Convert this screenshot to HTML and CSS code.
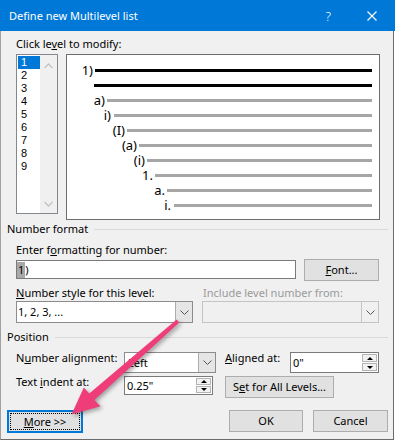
FILE: index.html
```html
<!DOCTYPE html>
<html lang="en">
<head>
  <meta charset="UTF-8" />
  <title>Define new Multilevel list</title>
  <link rel="stylesheet" href="styles.css">
</head>
<body>
  <div class="dialog">
    <div class="titlebar">
      <span class="title">Define new Multilevel list</span>
      <span class="help">?</span>
      <span class="close">
        <svg width="10" height="10" viewBox="0 0 10 10"><path d="M0.5 0.5 L9.5 9.5 M9.5 0.5 L0.5 9.5" stroke="#fff" stroke-width="1.1" fill="none"/></svg>
      </span>
    </div>

    <div class="panel">
      <div class="label">Click le<u>v</u>el to modify:</div>
      <div class="level-row">
        <div class="listbox">
          <ul class="levels">
            <li class="selected">1</li>
            <li>2</li>
            <li>3</li>
            <li>4</li>
            <li>5</li>
            <li>6</li>
            <li>7</li>
            <li>8</li>
            <li>9</li>
          </ul>
          <div class="scrollbar">
            <svg width="9" height="6" viewBox="0 0 9 6"><path d="M0.5 5 L4.5 1 L8.5 5" stroke="#c4c4c4" stroke-width="1.4" fill="none"/></svg>
            <svg width="9" height="6" viewBox="0 0 9 6"><path d="M0.5 1 L4.5 5 L8.5 1" stroke="#c4c4c4" stroke-width="1.4" fill="none"/></svg>
          </div>
        </div>

        <div class="preview">
          <div class="pv-row lvl-1"><span class="num">1)</span><span class="bar dark"></span></div>
          <div class="pv-row lvl-cont"><span class="num"></span><span class="bar dark"></span></div>
          <div class="pv-row lvl-2"><span class="num">a)</span><span class="bar"></span></div>
          <div class="pv-row lvl-3"><span class="num">i)</span><span class="bar"></span></div>
          <div class="pv-row lvl-4"><span class="num">(I)</span><span class="bar"></span></div>
          <div class="pv-row lvl-5"><span class="num">(a)</span><span class="bar"></span></div>
          <div class="pv-row lvl-6"><span class="num">(i)</span><span class="bar"></span></div>
          <div class="pv-row lvl-7"><span class="num">1.</span><span class="bar"></span></div>
          <div class="pv-row lvl-8"><span class="num">a.</span><span class="bar"></span></div>
          <div class="pv-row lvl-9"><span class="num">i.</span><span class="bar"></span></div>
        </div>
      </div>

      <div class="group"><span>Number format</span><span class="rule"></span></div>

      <div class="label gap-7">Enter f<u>o</u>rmatting for number:</div>
      <div class="fmt-row">
        <div class="textbox fmt-input"><span class="sel">1</span>)</div>
        <button class="btn font-btn"><u>F</u>ont...</button>
      </div>

      <div class="two-col labels">
        <div class="label"><u>N</u>umber style for this level:</div>
        <div class="label disabled">Include level number from:</div>
      </div>
      <div class="two-col combos">
        <div class="combo">
          <span class="combo-value">1, 2, 3, ...</span>
          <span class="combo-btn">
            <svg width="9" height="5" viewBox="0 0 9 5"><path d="M0.5 0.5 L4.5 4.5 L8.5 0.5" stroke="#555" fill="none"/></svg>
          </span>
        </div>
        <div class="combo off">
          <span class="combo-value"></span>
          <span class="combo-btn">
            <svg width="9" height="5" viewBox="0 0 9 5"><path d="M0.5 0.5 L4.5 4.5 L8.5 0.5" stroke="#555" fill="none"/></svg>
          </span>
        </div>
      </div>

      <div class="group gap-7"><span>Position</span><span class="rule"></span></div>

      <div class="pos-row first">
        <div class="label pos-label">N<u>u</u>mber alignment:</div>
        <div class="combo align-combo">
          <span class="combo-value">Left</span>
          <span class="combo-btn">
            <svg width="9" height="5" viewBox="0 0 9 5"><path d="M0.5 0.5 L4.5 4.5 L8.5 0.5" stroke="#555" fill="none"/></svg>
          </span>
        </div>
        <div class="label at-label"><u>A</u>ligned at:</div>
        <div class="spin tall">
          <span class="spin-value">0"</span>
          <span class="spin-btns"><span class="up"></span><span class="down"></span></span>
        </div>
      </div>

      <div class="pos-row second">
        <div class="label pos-label">Text <u>i</u>ndent at:</div>
        <div class="spin">
          <span class="spin-value">0.25"</span>
          <span class="spin-btns"><span class="up"></span><span class="down"></span></span>
        </div>
        <button class="btn levels-btn">S<u>e</u>t for All Levels...</button>
      </div>

      <div class="actions">
        <button class="btn more-btn"><span class="focus"><u>M</u>ore &gt;&gt;</span></button>
        <button class="btn ok-btn">OK</button>
        <button class="btn cancel-btn">Cancel</button>
      </div>
    </div>

    <!-- callout arrow drawn over the dialog -->
    <svg class="pointer" width="395" height="441" viewBox="0 0 395 441">
      <polygon points="176.7,319.5 179.3,322.5 94.4,399.9 100.4,406.3 71.5,414.5 83.8,387.5 89.3,393.6" fill="#ee3d79"/>
    </svg>
  </div>
</body>
</html>
```

FILE: styles.css
```css
* {
  box-sizing: border-box;
}

body {
  margin: 0;
  background: #fff;
  font-family: "Noto Sans", "Open Sans", sans-serif;
  font-size: 11px;
  line-height: 14px;
  color: #000;
}

u {
  text-underline-offset: 1px;
}

.dialog {
  position: relative;
  width: 395px;
  height: 441px;
}

.titlebar {
  height: 31px;
  background: #0078d7;
  color: #fff;
  display: flex;
  align-items: center;
  padding-left: 9px;
}

.title {
  flex: 1;
}

.help {
  font-size: 13px;
  margin-right: 36px;
  font-weight: 300;
}

.close {
  display: flex;
  margin-right: 18px;
}

.panel {
  width: 394px;
  height: 409px;
  background: #f0f0f0;
  border: 1px solid #6b6b6b;
  border-top: none;
  border-left-color: #a0a0a0;
  padding: 6px 0 0 15px;
}

.label {
  height: 14px;
  white-space: nowrap;
}

.label.disabled {
  color: #9a9a9a;
  padding-left: 1px;
}

.gap-7 {
  margin-top: 7px;
}

/* level picker + preview */
.level-row {
  display: flex;
  align-items: flex-start;
  margin-top: 3px;
  gap: 8px;
}

.listbox {
  width: 42px;
  height: 160px;
  border: 1px solid #828790;
  background: #fff;
  display: flex;
  padding: 1px 0 0 1px;
}

.levels {
  list-style: none;
  margin: 0;
  padding: 0;
  width: 22px;
  font-family: "Liberation Sans", Arial, sans-serif;
  font-size: 11px;
  line-height: 13px;
}

.levels li {
  padding-left: 3px;
  height: 13px;
}

.levels li.selected {
  background: #0078d7;
  color: #fff;
}

.scrollbar {
  flex: 1;
  margin-top: -1px;
  background: #f0f0f0;
  display: flex;
  flex-direction: column;
  justify-content: space-between;
  align-items: center;
  padding: 8px 0 6px;
}

.preview {
  width: 314px;
  height: 166px;
  border: 1px solid #6d6d6d;
  background: #fff;
  padding: 8px 7px 0 0;
  font-size: 13px;
}

.pv-row {
  display: flex;
  align-items: center;
  height: 15px;
  line-height: 15px;
}

.num {
  text-align: right;
  padding-right: 2px;
  flex: none;
}

.bar {
  flex: 1;
  height: 3px;
  background: #a6a6a6;
}

.bar.dark {
  background: #000;
}

.lvl-1 .num { width: 28px; }
.lvl-cont .num { width: 27px; }
.lvl-2 .num { width: 40px; }
.lvl-3 .num { width: 47px; padding-right: 3px; }
.lvl-4 .num { width: 60px; }
.lvl-5 .num { width: 72px; }
.lvl-6 .num { width: 80px; }
.lvl-7 .num { width: 88px; }
.lvl-8 .num { width: 100px; }
.lvl-9 .num { width: 107px; padding-right: 3px; }

/* group headings */
.group {
  display: flex;
  align-items: center;
  gap: 6px;
  margin-left: -9px;
  width: 381px;
  height: 14px;
  margin-top: 2px;
}

.group.gap-7 {
  margin-top: 7px;
}

.rule {
  flex: 1;
  height: 1px;
  background: #d9d9d9;
}

/* controls */
.textbox,
.combo,
.spin {
  background: #fff;
  border: 1px solid #7a7a7a;
  white-space: nowrap;
}

.fmt-row {
  display: flex;
  align-items: flex-start;
  margin-top: 2px;
  height: 22px;
}

.fmt-input {
  width: 280px;
  height: 19px;
  margin-top: 1px;
  line-height: 17px;
}

.sel {
  background: #a8a8a8;
  padding: 0 1px 1px;
}

.btn {
  font: inherit;
  color: #000;
  background: #e1e1e1;
  border: 1px solid #adadad;
  height: 22px;
  padding: 0;
  line-height: 14px;
}

.font-btn {
  width: 75px;
  margin-left: 8px;
}

.two-col {
  display: grid;
  grid-template-columns: 177px 177px;
  column-gap: 9px;
}

.two-col.labels {
  margin-top: 5px;
}

.two-col.combos {
  margin-top: 1px;
}

.combo {
  height: 22px;
  display: flex;
  border-color: #8c8c8c;
}

.combo-value {
  flex: 1;
  padding-left: 1px;
  line-height: 20px;
}

.combo-btn {
  width: 17px;
  background: #e5e5e5;
  border-left: 1px solid #adadad;
  display: flex;
  align-items: center;
  justify-content: center;
}

.combo.off {
  background: #f0f0f0;
  border-color: #c4c4c4;
}

.combo.off .combo-btn {
  background: #f0f0f0;
  border-left-color: #c4c4c4;
}

.pos-row {
  display: flex;
  align-items: flex-start;
}

.pos-row.first {
  margin-top: 7px;
  height: 22px;
}

.pos-row.second {
  margin-top: 2px;
  height: 23px;
}

.pos-label {
  width: 108px;
}

.align-combo {
  width: 92px;
  height: 21px;
  margin-top: 1px;
}

.align-combo .combo-value {
  padding-left: 3px;
  line-height: 19px;
}

.at-label {
  width: 65px;
  margin-left: 9px;
}

.spin {
  width: 89px;
  height: 19px;
  margin-top: 1px;
  display: flex;
  padding: 1px 1px 1px 0;
}

.spin.tall {
  height: 21px;
}

.spin-value {
  flex: 1;
  padding-left: 2px;
  line-height: 16px;
}

.spin.tall .spin-value {
  line-height: 18px;
}

.spin-btns {
  width: 15px;
  display: flex;
  flex-direction: column;
  gap: 1px;
}

.spin-btns span {
  flex: 1;
  background: #f2f2f2;
  border: 1px solid #b4b4b4;
  display: flex;
  align-items: center;
  justify-content: center;
}

.spin-btns .up::before {
  content: "";
  border-left: 3px solid transparent;
  border-right: 3px solid transparent;
  border-bottom: 3px solid #000;
}

.spin-btns .down::before {
  content: "";
  border-left: 3px solid transparent;
  border-right: 3px solid transparent;
  border-top: 3px solid #000;
}

.levels-btn {
  width: 109px;
  margin-left: 12px;
  margin-top: 1px;
}

/* dialog buttons */
.actions {
  display: flex;
  align-items: flex-start;
  margin-left: -9px;
  width: 381px;
  margin-top: 12px;
}

.more-btn {
  width: 76px;
  height: 23px;
  border: 2px solid #0078d7;
  padding: 1px;
}

.focus {
  display: flex;
  align-items: center;
  justify-content: center;
  height: 100%;
  border: 1px dotted #000;
}

.ok-btn {
  width: 74px;
  margin-left: auto;
}

.cancel-btn {
  width: 75px;
  margin-left: 10px;
}

.pointer {
  position: absolute;
  left: 0;
  top: 0;
  pointer-events: none;
  filter: drop-shadow(2px 2px 2px rgba(0, 0, 0, 0.35));
}
```
